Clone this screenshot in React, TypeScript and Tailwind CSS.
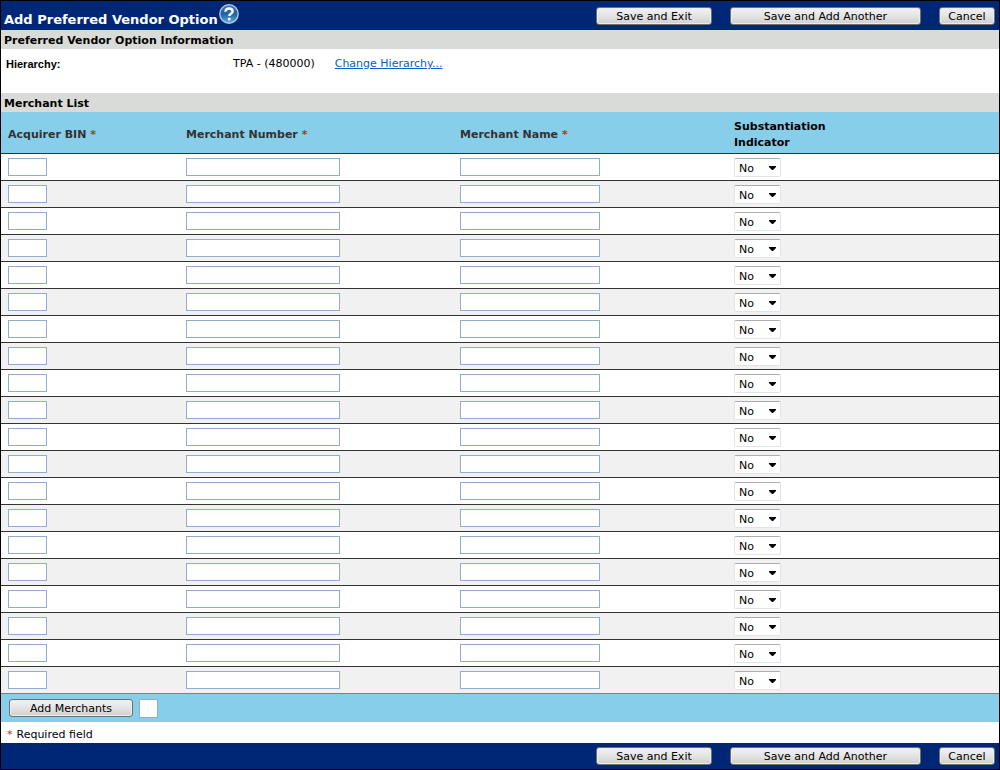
import React, { useState } from 'react';

const ROW_COUNT = 20;

type Merchant = {
  bin: string;
  number: string;
  name: string;
  indicator: string;
};

const emptyMerchant: Merchant = { bin: '', number: '', name: '', indicator: 'No' };

interface PushButtonProps {
  label: string;
  className: string;
  onClick?: () => void;
}

const PushButton: React.FC<PushButtonProps> = ({ label, className, onClick }) => (
  <button
    type="button"
    onClick={onClick}
    className={`h-[18px] shrink-0 rounded-[3px] border border-[#707070] bg-linear-to-b from-[#f2f2f2] via-[#e4e4e4] via-50% to-[#cfcfcf] text-center leading-[18px] whitespace-nowrap text-black shadow-[inset_0_0_0_1px_#ececec] ${className}`}
  >
    {label}
  </button>
);

const ActionButtons: React.FC = () => (
  <div className="flex gap-[18px]">
    <PushButton label="Save and Exit" className="w-[116px]" />
    <PushButton label="Save and Add Another" className="w-[191px]" />
    <PushButton label="Cancel" className="w-[56px]" />
  </div>
);

const HelpIcon: React.FC = () => (
  <svg width="22" height="22" viewBox="0 0 22 22" fill="none" aria-hidden="true">
    <defs>
      <linearGradient id="help-fill" x1="0" y1="0" x2="0" y2="1">
        <stop offset="0" stopColor="#3f78b3" />
        <stop offset="0.5" stopColor="#1f62a3" />
        <stop offset="1" stopColor="#5cb0e6" />
      </linearGradient>
    </defs>
    <circle cx="11" cy="11" r="9.2" fill="url(#help-fill)" stroke="#b4c3d8" strokeWidth="1.4" />
    <path d="M7.4 8.7C7.4 6.4 9 5.5 11 5.5s3.6 1.1 3.6 3c0 2.3-3.4 2.3-3.4 4.6" stroke="#fff" strokeWidth="2.3" />
    <circle cx="11.2" cy="16" r="1.5" fill="#fff" />
  </svg>
);

const SectionBar: React.FC<{ title: string }> = ({ title }) => (
  <h2 className="h-[19px] bg-[#d9dbd8] px-[3px] font-bold leading-[21px] text-black">{title}</h2>
);

const Required: React.FC = () => <span className="text-[#a0410d]">*</span>;

const inputStyle = 'block h-[18px] border border-[#91acce] bg-white px-1 outline-none';

export default function App() {
  const [merchants, setMerchants] = useState<Merchant[]>(
    Array.from({ length: ROW_COUNT }, () => ({ ...emptyMerchant }))
  );
  const [addCount, setAddCount] = useState('');

  const update = (idx: number, field: keyof Merchant, value: string) => {
    setMerchants(merchants.map((m, i) => (i === idx ? { ...m, [field]: value } : m)));
  };

  const addMerchants = () => {
    const count = parseInt(addCount, 10) || 0;
    setMerchants([...merchants, ...Array.from({ length: count }, () => ({ ...emptyMerchant }))]);
    setAddCount('');
  };

  return (
    <div className="border border-black bg-white font-['DejaVu_Sans',Verdana,sans-serif] text-[11px] text-black">
      {/* Title bar */}
      <header className="flex h-[29px] items-center justify-between bg-[#002776] pr-1 pl-[3px]">
        <div className="flex items-start">
          <h1 className="pt-2 text-[13px] leading-[18px] font-bold whitespace-nowrap text-white">Add Preferred Vendor Option</h1>
          <a href="#help" aria-label="Help">
            <HelpIcon />
          </a>
        </div>
        <ActionButtons />
      </header>

      <SectionBar title="Preferred Vendor Option Information" />
      <div className="flex h-11 items-start px-[5px] pt-1.5 leading-[18px]">
        <span className="w-[227px] font-['Liberation_Sans',Arial,sans-serif] font-bold">Hierarchy:</span>
        <span className="mr-5">TPA - (480000)</span>
        <a href="#hierarchy" className="text-[#0a5ccf] underline">Change Hierarchy...</a>
      </div>

      <SectionBar title="Merchant List" />
      <table className="w-full table-fixed border-separate border-spacing-0">
        <thead>
          <tr className="h-[42px] bg-[#87ceeb] text-left leading-[16px] text-[#333] [&>th]:border-b [&>th]:border-[#333] [&>th]:pt-1 [&>th]:pl-[7px]">
            <th className="w-[178px]">Acquirer BIN <Required /></th>
            <th className="w-[274px]">Merchant Number <Required /></th>
            <th className="w-[274px]">Merchant Name <Required /></th>
            <th className="text-black">Substantiation<br />Indicator</th>
          </tr>
        </thead>
        <tbody>
          {merchants.map((m, idx) => (
            <tr
              key={idx}
              className="h-[27px] odd:bg-white even:bg-[#f1f1f1] [&>td]:border-b [&>td]:border-[#333] [&>td]:pl-[7px] last:[&>td]:border-[#808080]"
            >
              <td>
                <input
                  type="text"
                  aria-label={`Acquirer BIN ${idx + 1}`}
                  value={m.bin}
                  onChange={(e) => update(idx, 'bin', e.target.value)}
                  className={`${inputStyle} w-[39px]`}
                />
              </td>
              <td>
                <input
                  type="text"
                  aria-label={`Merchant Number ${idx + 1}`}
                  value={m.number}
                  onChange={(e) => update(idx, 'number', e.target.value)}
                  className={`${inputStyle} w-[154px]`}
                />
              </td>
              <td>
                <input
                  type="text"
                  aria-label={`Merchant Name ${idx + 1}`}
                  value={m.name}
                  onChange={(e) => update(idx, 'name', e.target.value)}
                  className={`${inputStyle} w-[140px]`}
                />
              </td>
              <td>
                <div className="grid w-[47px] items-center">
                  <select
                    aria-label={`Substantiation Indicator ${idx + 1}`}
                    value={m.indicator}
                    onChange={(e) => update(idx, 'indicator', e.target.value)}
                    className="col-start-1 row-start-1 h-[19px] appearance-none rounded-[2px] border border-[#e2e3ea] border-t-[#abadb3] bg-white pt-0.5 pl-1 leading-[16px]"
                  >
                    <option>No</option>
                    <option>Yes</option>
                  </select>
                  <svg width="7" height="4" viewBox="0 0 7 4" className="pointer-events-none col-start-1 row-start-1 mt-0.5 mr-[5px] justify-self-end" aria-hidden="true">
                    <path d="M0 0h7v1L4 4H3L0 1z" fill="#000" />
                  </svg>
                </div>
              </td>
            </tr>
          ))}
        </tbody>
      </table>

      {/* Add more rows */}
      <div className="flex h-7 items-center gap-1.5 bg-[#87ceeb] pl-2">
        <PushButton label="Add Merchants" className="w-[124px]" onClick={addMerchants} />
        <input
          type="text"
          aria-label="Number of merchants to add"
          value={addCount}
          onChange={(e) => setAddCount(e.target.value)}
          className="h-[19px] w-[19px] border border-[#91acce] bg-white text-center outline-none"
        />
      </div>

      <p className="flex h-[21px] gap-1 pt-1 pl-1.5 leading-[18px]">
        <Required /> Required field
      </p>

      <footer className="flex h-[26px] items-center justify-end bg-[#002776] pr-1">
        <ActionButtons />
      </footer>
    </div>
  );
}
